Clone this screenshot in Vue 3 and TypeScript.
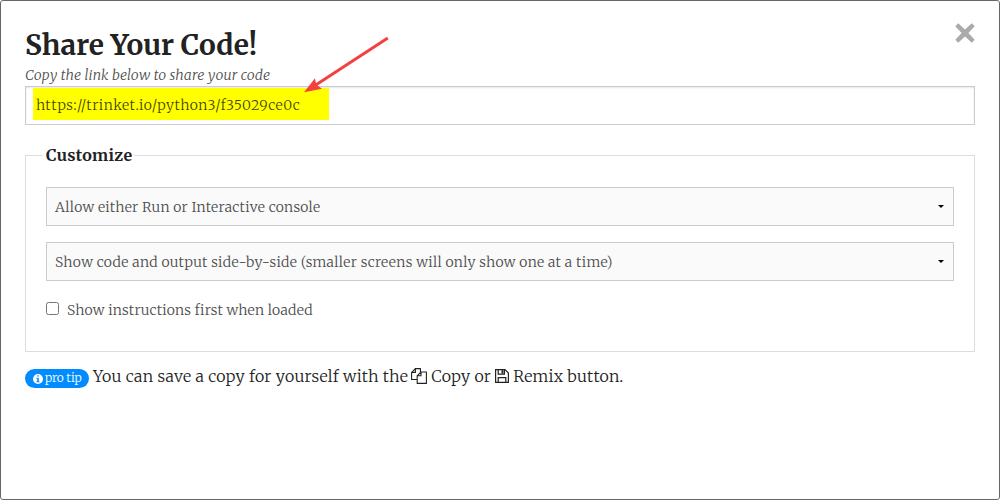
<script setup lang="ts">
import { ref } from 'vue'

const shareUrl = ref('https://trinket.io/python3/f35029ce0c')
const runMode = ref('either')
const layoutMode = ref('both')
const showInstructions = ref(false)
</script>

<template>
  <main class="modal">
    <button class="close" aria-label="Close">
      <svg width="20" height="20" viewBox="0 0 20 20"><path d="M3.2 0.3 10 6.6 16.8 0.3 19.7 3.2 13.4 10 19.7 16.8 16.8 19.7 10 13.4 3.2 19.7 0.3 16.8 6.6 10 0.3 3.2Z" fill="#aaa" /></svg>
    </button>
    <h1><span>Share Your Code!</span></h1>
    <p class="subtitle"><span>Copy the link below to share your code</span></p>
    <div class="link">
      <mark><span>{{ shareUrl }}</span></mark>
      <svg class="arrow" width="90" height="62" viewBox="0 0 90 62">
        <path d="M83.8 3 11 50.4" stroke="#f44040" stroke-width="3" fill="none" />
        <path d="M0 57.2 11 43.2 12.2 49.5 18 53.8Z" fill="#f44040" />
      </svg>
    </div>
    <fieldset>
      <legend><span>Customize</span></legend>
      <select v-model="runMode" class="run">
        <option value="either">Allow either Run or Interactive console</option>
      </select>
      <select v-model="layoutMode" class="view">
        <option value="both">Show code and output side-by-side (smaller screens will only show one at a time)</option>
      </select>
      <label><input v-model="showInstructions" type="checkbox" /><span>Show instructions first when loaded</span></label>
    </fieldset>
    <div class="tip">
      <span class="badge">
        <svg width="10" height="10" viewBox="0 0 10 10"><circle cx="5" cy="5" r="5" fill="#fff" /><path d="M4.2 1.3h1.6v1.3H4.2zM3.4 3.7h2.4v3.5h.8v1.1H3.4V7.2h.8V4.8h-.8z" fill="#0a8cff" /></svg>
        <span class="badge-text">pro tip</span>
      </span>
      <span class="t1">You can save a copy for yourself with the</span>
      <svg class="copy" width="16" height="16" viewBox="0 0 16 16" fill="none" stroke="#222" stroke-width="1.1"><path d="M6 11.5H.6V4.4L4.4.6H9.4V4M4.4.6V4.4H.6M6.2 15.4V7.8L10 4H15.4V15.4ZM10 4V7.8H6.2" /></svg>
      <span class="t2">Copy or</span>
      <svg class="save" width="14" height="14" viewBox="0 0 14 14" fill="none" stroke="#222" stroke-width="1.2"><path d="M.6.6H10L13.4 4V13.4H.6ZM3.2 13V8.6H10.8V13M3.2 1V5.2H9.4V1" /><path d="M6.5 1.2H8.4V4.5H6.5Z" fill="#222" stroke="none" /></svg>
      <span class="t3">Remix button.</span>
    </div>
  </main>
</template>

<style>
body { margin: 0; }
</style>

<style scoped>
* { box-sizing: border-box; }
.modal {
  position: relative;
  width: 1000px;
  height: 500px;
  padding: 24px 24px 0;
  border: 1px solid #666;
  border-radius: 3px;
  background: #fff;
  color: #222;
  font-family: Merriweather, "DejaVu Serif Condensed", "DejaVu Serif", serif;
  font-weight: 300;
  white-space: nowrap;
}
.close { position: absolute; top: 22px; right: 24px; width: 20px; height: 20px; padding: 0; border: 0; background: none; }
.close svg { display: block; }
h1 { height: 40px; margin: 0; font-size: 28px; line-height: 40px; font-weight: 700; letter-spacing: .03px; }
.subtitle { height: 21px; margin: 0; font-size: 14px; line-height: 21px; font-style: italic; letter-spacing: .17px; color: #4d4d4d; }
.link { position: relative; height: 39px; padding: 1px 0 0 7px; border: 1px solid #ccc; box-shadow: inset 0 1px 2px rgba(0, 0, 0, .1); }
mark { display: block; width: 296px; height: 32px; padding-left: 3px; background: #ff0; color: rgba(0, 0, 0, .75); font-size: 14px; line-height: 34px; letter-spacing: .45px; }
.arrow { position: absolute; left: 278px; top: -52px; }
fieldset { height: 207px; margin: 20px 0 0; padding: 22px 20px 0; border: 1px solid #ddd; min-width: 0; }
legend { height: 20px; margin-left: -3px; padding: 0 2px 0 3px; font-size: 16px; line-height: 20px; font-weight: 700; letter-spacing: .33px; }
select {
  display: block;
  width: 100%;
  height: 39px;
  margin: 0 0 16px;
  padding: 0 8px;
  border: 1px solid #ccc;
  border-radius: 0;
  appearance: none;
  color: #4d4d4d;
  font: inherit;
  font-size: 14px;
  letter-spacing: .25px;
  background: #fafafa url("data:image/svg+xml,%3Csvg xmlns='http://www.w3.org/2000/svg' width='6' height='3'%3E%3Cpath d='M0 0H6L3 3Z'/%3E%3C/svg%3E") no-repeat right 9px center;
}
.view { letter-spacing: .285px; }
label { display: flex; align-items: center; height: 24px; color: #4d4d4d; font-size: 14px; letter-spacing: .17px; }
label span { padding-top: 1px; }
input { width: 13px; height: 13px; margin: 0 8px 2px 0; }
.tip { display: flex; align-items: center; height: 24px; margin-top: 12px; font-size: 16px; letter-spacing: .25px; }
.badge { display: flex; align-items: center; width: 64px; height: 19px; margin: 5px 4px 0 0; padding-left: 8px; border-radius: 10px; background: #008cff; color: #fff; font-size: 12px; letter-spacing: -.1px; }
.badge-text { margin: 0 0 2px 2px; }
.copy { margin: 0 4px 0 3px; }
.save { margin: 0 4px; }
</style>
